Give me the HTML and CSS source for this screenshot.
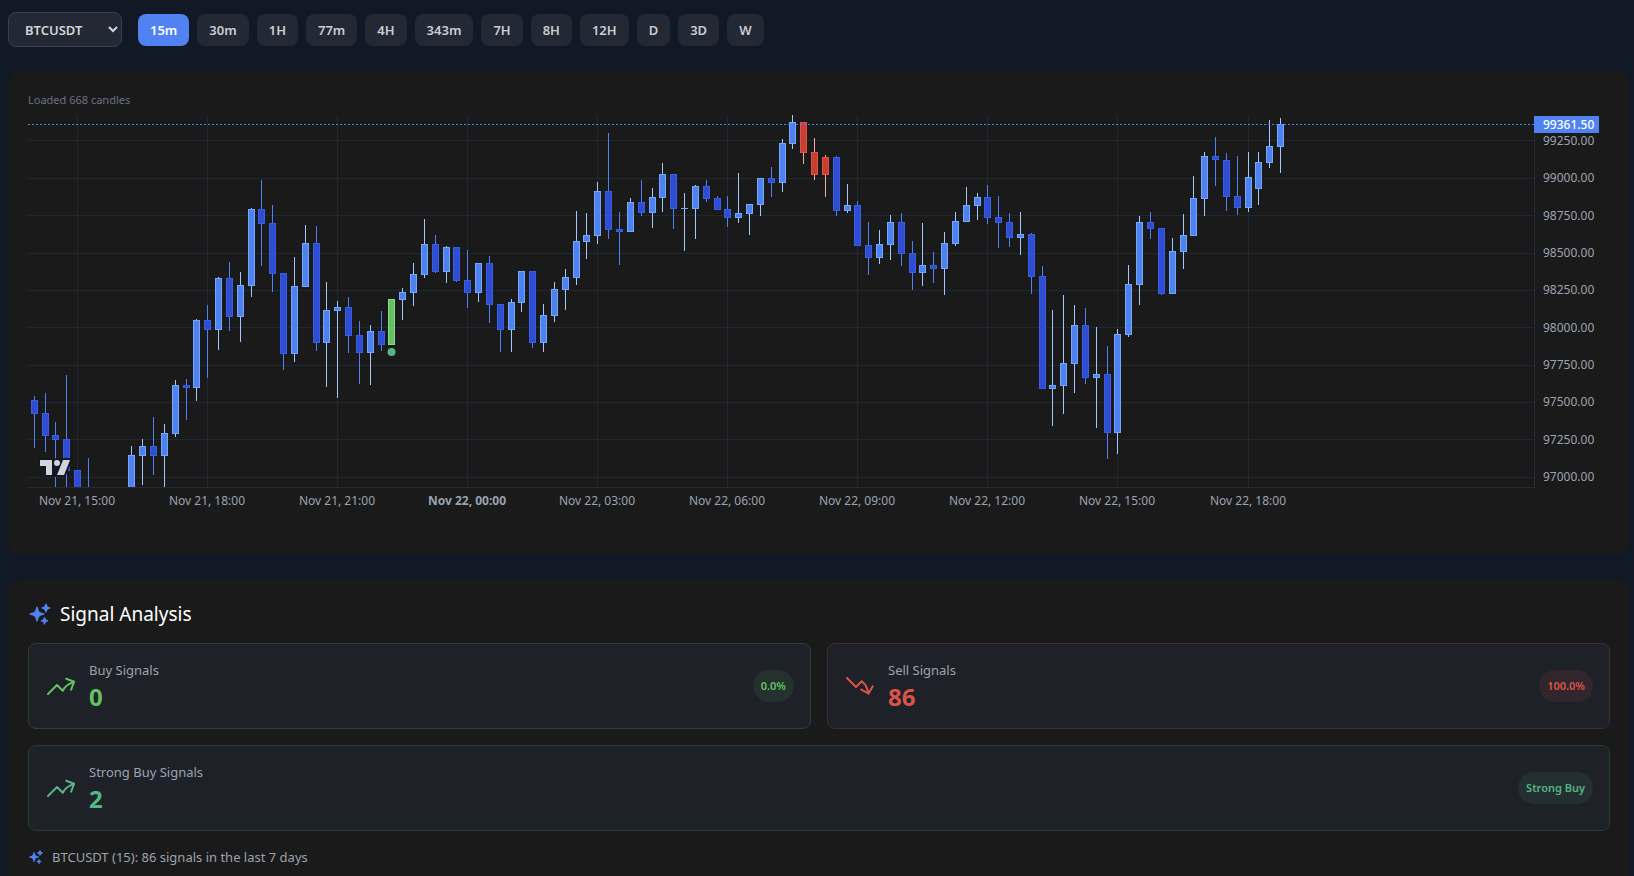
FILE: index.html
```html
<!DOCTYPE html>
<html lang="en">
<head>
<meta charset="utf-8">
<title>BTCUSDT signals</title>
<link rel="stylesheet" href="styles.css">
</head>
<body>
<svg class="sprite" aria-hidden="true">
  <symbol id="sparkles" viewBox="0 0 24 24"><path fill="currentColor" fill-rule="evenodd" d="M9 4.5a.75.75 0 0 1 .721.544l.813 2.846a3.75 3.75 0 0 0 2.576 2.576l2.846.813a.75.75 0 0 1 0 1.442l-2.846.813a3.75 3.75 0 0 0-2.576 2.576l-.813 2.846a.75.75 0 0 1-1.442 0l-.813-2.846a3.75 3.75 0 0 0-2.576-2.576l-2.846-.813a.75.75 0 0 1 0-1.442l2.846-.813A3.75 3.75 0 0 0 7.466 7.89l.813-2.846A.75.75 0 0 1 9 4.5ZM18 1.5a.75.75 0 0 1 .728.568l.258 1.036c.236.94.97 1.674 1.91 1.91l1.036.258a.75.75 0 0 1 0 1.456l-1.036.258c-.94.236-1.674.97-1.91 1.91l-.258 1.036a.75.75 0 0 1-1.456 0l-.258-1.036a2.625 2.625 0 0 0-1.91-1.91l-1.036-.258a.75.75 0 0 1 0-1.456l1.036-.258a2.625 2.625 0 0 0 1.91-1.91l.258-1.036A.75.75 0 0 1 18 1.5ZM16.5 15a.75.75 0 0 1 .712.513l.394 1.183c.15.447.5.799.948.948l1.183.395a.75.75 0 0 1 0 1.422l-1.183.395c-.447.15-.799.5-.948.948l-.395 1.183a.75.75 0 0 1-1.422 0l-.395-1.183a1.5 1.5 0 0 0-.948-.948l-1.183-.395a.75.75 0 0 1 0-1.422l1.183-.395c.447-.15.799-.5.948-.948l.395-1.183A.75.75 0 0 1 16.5 15Z"/></symbol>
  <symbol id="trend-up" viewBox="0 0 24 24"><path fill="none" stroke="currentColor" stroke-width="1.5" stroke-linecap="round" stroke-linejoin="round" d="M2.25 18 9 11.25l4.306 4.306a11.95 11.95 0 0 1 5.814-5.518l2.74-1.22m0 0-5.94-2.281m5.94 2.28-2.28 5.941"/></symbol>
  <symbol id="trend-down" viewBox="0 0 24 24"><path fill="none" stroke="currentColor" stroke-width="1.5" stroke-linecap="round" stroke-linejoin="round" d="M2.25 6 9 12.75l4.286-4.286a11.948 11.948 0 0 1 4.306 6.43l.776 2.898m0 0 3.182-5.511m-3.182 5.51-5.511-3.181"/></symbol>
</svg>

<main class="page">
  <div class="toolbar">
    <select class="symbol-select" aria-label="Symbol"><option>BTCUSDT</option></select>
    <div class="intervals" role="group" aria-label="Interval">
      <button class="interval interval-active" type="button">15m</button>
      <button class="interval" type="button">30m</button>
      <button class="interval" type="button">1H</button>
      <button class="interval" type="button">77m</button>
      <button class="interval" type="button">4H</button>
      <button class="interval" type="button">343m</button>
      <button class="interval" type="button">7H</button>
      <button class="interval" type="button">8H</button>
      <button class="interval" type="button">12H</button>
      <button class="interval" type="button">D</button>
      <button class="interval" type="button">3D</button>
      <button class="interval" type="button">W</button>
    </div>
  </div>

  <section class="card">
    <p class="status">Loaded 668 candles</p>
    <svg class="chart" id="chart" viewBox="28 115 1582 420" role="img" aria-label="BTCUSDT 15 minute candles">
      <g id="grid"></g>
      <g id="candles"></g>
      <circle class="marker" cx="391.5" cy="352" r="4"/>
      <line class="price-line" x1="28" x2="1534" y1="124.5" y2="124.5"/>
      <rect class="price-tag" x="1534" y="116" width="65" height="17"/>
      <text class="price-tag-text" x="1543" y="129">99361.50</text>
      <a href="#chart" aria-label="TradingView">
        <g transform="translate(38 458)">
          <path class="logo-edge" fill-rule="evenodd" d="M2 0H0v10h6v9h21.4l.5-1.3 6-15 1-2.7H23.7l-.5 1.3-.2.6a5 5 0 0 0-7-.9V0H2Zm20 17h4l5.2-13 .8-2h-7l-1 2.5-.2.5-1.5 3.8-.3.7V17Zm-.8-10a3 3 0 0 0 .7-2.7A3 3 0 1 0 16.8 7h4.4ZM14 7V2H2v6h6v9h6V7Z"/>
          <path class="logo-face" d="M14 2H2v6h6v9h6V2Zm12 15h-7l6-15h7l-6 15Zm-7-9a3 3 0 1 0 0-6 3 3 0 0 0 0 6Z"/>
        </g>
      </a>
    </svg>
  </section>

  <section class="card card-signals">
    <h2 class="heading"><svg class="heading-icon" aria-hidden="true"><use href="#sparkles"/></svg>Signal Analysis</h2>
    <div class="stats">
      <article class="stat stat-buy">
        <svg class="stat-icon" aria-hidden="true"><use href="#trend-up"/></svg>
        <div class="stat-body"><p class="stat-label">Buy Signals</p><p class="stat-value">0</p></div>
        <span class="badge">0.0%</span>
      </article>
      <article class="stat stat-sell">
        <svg class="stat-icon" aria-hidden="true"><use href="#trend-down"/></svg>
        <div class="stat-body"><p class="stat-label">Sell Signals</p><p class="stat-value">86</p></div>
        <span class="badge">100.0%</span>
      </article>
      <article class="stat stat-strong">
        <svg class="stat-icon" aria-hidden="true"><use href="#trend-up"/></svg>
        <div class="stat-body"><p class="stat-label">Strong Buy Signals</p><p class="stat-value">2</p></div>
        <span class="badge">Strong Buy</span>
      </article>
    </div>
    <p class="summary"><svg class="summary-icon" aria-hidden="true"><use href="#sparkles"/></svg>BTCUSDT (15): 86 signals in the last 7 days</p>
  </section>
</main>
<script src="chart.js"></script>
</body>
</html>
```
FILE: styles.css
```css
* { box-sizing: border-box; }

body {
  margin: 0;
  background: #111826;
  color: #ffffff;
  font-family: "Noto Sans", "Open Sans", sans-serif;
}

p, h2 { margin: 0; }

.sprite { display: none; }

.page {
  display: flex;
  flex-direction: column;
  gap: 24px;
  min-height: 100vh;
  padding: 12px 4px 0 8px;
}

.toolbar {
  display: flex;
  align-items: center;
  gap: 16px;
}

.symbol-select {
  width: 114px;
  height: 35px;
  padding: 0 0 0 12px;
  border: 1px solid #374151;
  border-radius: 8px;
  background-color: #222834;
  color: #d1d5db;
  font: 600 13px "Noto Sans", "Open Sans", sans-serif;
}

.intervals {
  display: flex;
  flex-wrap: wrap;
  gap: 8px;
}

.interval {
  height: 32px;
  padding: 0 12px;
  border: 0;
  border-radius: 8px;
  background: #222834;
  color: #c9cdd4;
  font: 600 13px "Noto Sans", "Open Sans", sans-serif;
}

.interval-active {
  background: #5082f2;
  color: #ffffff;
}

.card {
  padding: 20px;
  border-radius: 12px;
  background: #1a1a1a;
}

.card-signals {
  flex: 1;
  padding-bottom: 0;
  border-radius: 12px 12px 0 0;
}

.status {
  color: #6b7280;
  font-size: 11px;
  line-height: 18px;
  padding-bottom: 6px;
}

.chart {
  display: block;
  width: 100%;
  height: auto;
}

.grid-line { fill: #1f2733; }
.axis-line { fill: #262a38; }
.axis-text { fill: #9ca3af; font-size: 12px; }
.time-text { text-anchor: middle; }
.axis-text-bold { font-weight: 700; }

.price-line {
  stroke: #4f83f5;
  stroke-dasharray: 2 2;
}

.price-tag { fill: #5082f2; }
.price-tag-text { fill: #ffffff; font-size: 12px; font-weight: 500; }
.marker { fill: #57b583; }

.logo-edge { fill: #131722; }
.logo-face { fill: #d1d4dc; }

.up-wick { fill: #a3c8fb; }
.up-edge { fill: #74a7f8; }
.up-body { fill: #4f82f1; }
.down-wick { fill: #4f82f1; }
.down-edge { fill: #365ee6; }
.down-body { fill: #2f4dd3; }
.sell-wick { fill: #f4a9a5; }
.sell-edge { fill: #dc5449; }
.sell-body { fill: #c83f30; }
.buy-wick, .buy-edge { fill: #86dd85; }
.buy-body { fill: #63c163; }

.heading {
  display: flex;
  align-items: center;
  gap: 8px;
  margin-bottom: 14px;
  font-size: 19px;
  font-weight: 400;
  line-height: 30px;
}

.heading-icon {
  width: 24px;
  height: 24px;
  color: #5082f2;
}

.stats {
  display: grid;
  grid-template-columns: 1fr 1fr;
  gap: 16px;
}

.stat {
  display: flex;
  align-items: center;
  gap: 12px;
  padding: 16px;
  border: 1px solid;
  border-radius: 8px;
  background: #1e2128;
}

.stat-buy { border-color: #2a4134; }
.stat-sell { border-color: #432a30; }
.stat-strong { grid-column: 1 / -1; border-color: #283f39; }

.stat-icon {
  width: 32px;
  height: 32px;
}

.stat-body { flex: 1; }

.stat-label {
  color: #9ca3af;
  font-size: 13px;
  line-height: 20px;
}

.stat-value {
  padding-top: 2px;
  font-size: 24px;
  font-weight: 700;
  line-height: 30px;
}

.badge {
  padding: 0 8px;
  border-radius: 16px;
  font-size: 11px;
  font-weight: 600;
  line-height: 32px;
}

.stat-buy .stat-icon, .stat-buy .stat-value, .stat-buy .badge { color: #63c163; }
.stat-sell .stat-icon, .stat-sell .stat-value, .stat-sell .badge { color: #dc5449; }
.stat-strong .stat-icon, .stat-strong .stat-value, .stat-strong .badge { color: #57b583; }
.stat-buy .badge { background: #25312e; }
.stat-sell .badge { background: #31262b; }
.stat-strong .badge { background: #242f31; }

.summary {
  display: flex;
  align-items: center;
  gap: 8px;
  padding-top: 16px;
  color: #9ca3af;
  font-size: 13px;
  line-height: 20px;
}

.summary-icon {
  width: 16px;
  height: 16px;
  color: #5082f2;
}
```
FILE: chart.js
```js
// x, wick top, body top, body bottom, wick bottom, kind
const candles = [
  [34,396,400,414,448,'down'],[45,393,413,436,452,'down'],[55,422,435,440,487,'down'],
  [66,375,439,471,487,'down'],[77,470,470,487,487,'down'],[88,458,487,487,487,'down'],
  [131,446,455,487,487,'up'],[142,439,446,456,485,'up'],[153,417,446,456,475,'down'],
  [164,424,433,456,487,'up'],[175,380,385,434,437,'up'],[186,379,385,388,420,'down'],
  [196,319,320,388,401,'up'],[207,305,320,330,378,'down'],[218,277,278,330,350,'up'],
  [229,262,278,317,331,'down'],[240,272,285,317,342,'up'],[251,208,209,286,297,'up'],
  [261,180,209,224,266,'down'],[272,205,223,274,292,'down'],[283,273,273,354,370,'down'],
  [294,257,286,354,362,'up'],[305,225,243,287,287,'up'],[316,226,243,343,351,'down'],
  [326,282,310,343,387,'up'],[337,301,307,311,398,'up'],[348,297,307,336,353,'down'],
  [359,321,335,353,384,'down'],[370,325,331,353,385,'up'],[381,311,331,345,351,'down'],
  [391,299,299,345,345,'buy'],[402,288,292,300,320,'up'],[413,263,274,293,306,'up'],
  [424,219,244,275,278,'up'],[435,235,244,272,273,'down'],[446,246,247,272,283,'up'],
  [456,247,247,281,282,'down'],[467,250,280,293,308,'down'],[478,263,263,293,302,'up'],
  [489,256,263,305,323,'down'],[500,304,304,330,352,'down'],[511,299,302,330,352,'up'],
  [521,271,271,303,312,'up'],[532,271,271,343,348,'down'],[543,304,315,343,352,'up'],
  [554,282,289,316,322,'up'],[565,269,277,290,310,'up'],[576,211,241,278,285,'up'],
  [586,213,235,242,259,'up'],[597,182,191,236,244,'up'],[608,133,191,230,239,'down'],
  [619,212,229,232,265,'down'],[630,198,202,232,232,'up'],[641,180,202,213,216,'down'],
  [652,188,197,213,228,'up'],[662,163,174,198,212,'up'],[673,174,174,209,229,'down'],
  [684,193,208,209,251,'up'],[695,185,186,209,239,'up'],[706,180,186,199,202,'down'],
  [717,196,198,210,210,'down'],[727,196,209,218,227,'down'],[738,173,213,218,223,'up'],
  [749,204,204,214,235,'up'],[760,178,178,205,216,'up'],[771,167,178,183,197,'down'],
  [782,139,143,183,192,'up'],[792,115,122,144,149,'up'],[803,122,122,153,164,'sell'],
  [814,138,152,175,180,'sell'],[825,155,157,175,197,'sell'],[836,156,157,211,216,'down'],
  [847,184,205,211,213,'up'],[857,201,205,246,246,'down'],[868,222,245,258,275,'down'],
  [879,230,244,258,264,'up'],[890,215,222,245,260,'up'],[901,213,222,254,266,'down'],
  [912,241,253,273,290,'down'],[922,223,265,273,286,'up'],[933,252,265,269,283,'down'],
  [944,232,243,269,295,'up'],[955,212,221,244,246,'up'],[966,187,205,222,222,'up'],
  [977,193,197,206,220,'up'],[987,185,197,218,224,'down'],[998,196,217,223,248,'down'],
  [1009,213,222,238,247,'down'],[1020,212,234,238,255,'up'],[1031,233,234,277,294,'down'],
  [1042,266,276,389,389,'down'],[1052,310,385,389,426,'up'],[1063,295,363,386,414,'up'],
  [1074,305,325,364,393,'up'],[1085,308,325,378,384,'down'],[1096,327,374,378,428,'up'],
  [1107,346,374,433,459,'down'],[1117,329,334,433,454,'up'],[1128,265,284,335,337,'up'],
  [1139,216,222,285,305,'up'],[1150,212,222,229,239,'down'],[1161,228,228,294,295,'down'],
  [1172,238,251,294,294,'up'],[1183,214,235,252,269,'up'],[1193,176,198,236,236,'up'],
  [1204,152,156,199,216,'up'],[1215,137,156,160,186,'down'],[1226,153,160,197,211,'down'],
  [1237,156,196,208,215,'down'],[1248,152,177,208,212,'up'],[1258,152,162,189,205,'up'],
  [1269,120,146,163,168,'up'],[1280,118,124,147,173,'up']
];
// grid line, label baseline, price
const prices = [[140,145,'99250.00'],[178,182,'99000.00'],[215,220,'98750.00'],[253,257,'98500.00'],
  [290,294,'98250.00'],[327,332,'98000.00'],[365,369,'97750.00'],[402,406,'97500.00'],
  [439,444,'97250.00'],[477,481,'97000.00']];
const times = [[77,'Nov 21, 15:00'],[207,'Nov 21, 18:00'],[337,'Nov 21, 21:00'],[467,'Nov 22, 00:00'],
  [597,'Nov 22, 03:00'],[727,'Nov 22, 06:00'],[857,'Nov 22, 09:00'],[987,'Nov 22, 12:00'],
  [1117,'Nov 22, 15:00'],[1248,'Nov 22, 18:00']];

const rect = (cls, x, y, w, h) => `<rect class="${cls}" x="${x}" y="${y}" width="${w}" height="${h}"/>`;
let grid = '';
for (const [x, label] of times) {
  const bold = label.endsWith(' 00:00') ? ' axis-text-bold' : '';
  grid += rect('grid-line', x, 115, 1, 372);
  grid += `<text class="axis-text time-text${bold}" x="${x}" y="505">${label}</text>`;
}
for (const [y, baseline, label] of prices) {
  grid += rect('grid-line', 28, y, 1506, 1);
  grid += `<text class="axis-text" x="1543" y="${baseline}">${label}</text>`;
}
grid += rect('axis-line', 28, 487, 1507, 1) + rect('axis-line', 1534, 115, 1, 372);
document.getElementById('grid').innerHTML = grid;

document.getElementById('candles').innerHTML = candles.map(([x, high, top, bottom, low, kind]) => {
  let s = rect(kind + '-wick', x, high, 1, low - high);
  if (bottom > top) s += rect(kind + '-edge', x - 3, top, 7, bottom - top);
  // the body continues under the time axis when it is cut off there
  const end = bottom === 487 ? bottom : bottom - 1;
  if (end > top + 1) s += rect(kind + '-body', x - 2, top + 1, 5, end - top - 1);
  return s;
}).join('');
```
